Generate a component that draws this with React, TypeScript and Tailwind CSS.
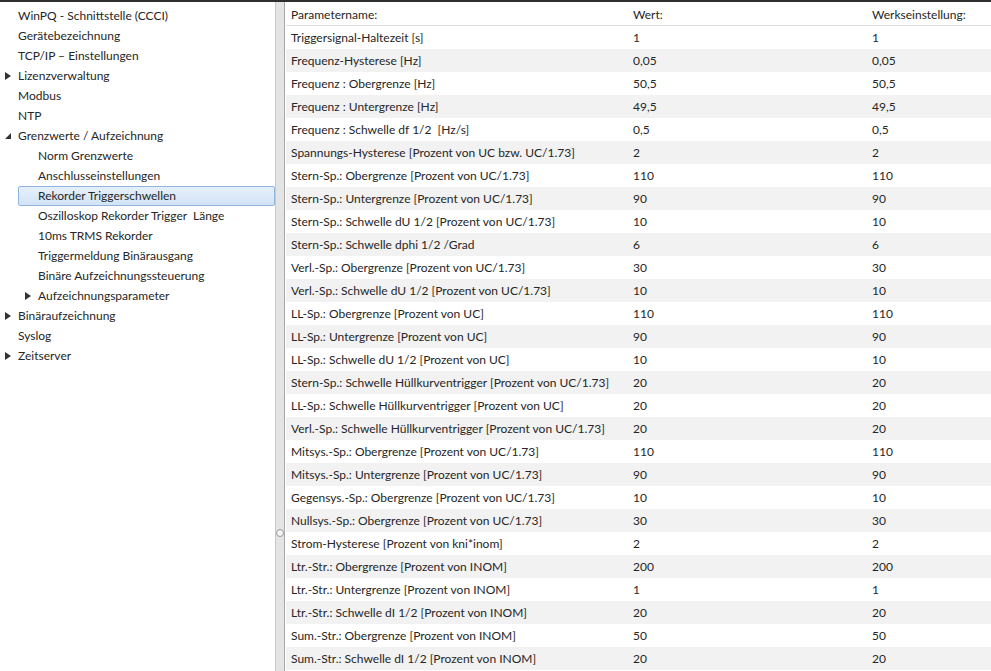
import React from "react";

type Node = { label: string; level: number; arrow?: "closed" | "open"; selected?: boolean };

const tree: Node[] = [
  { label: "WinPQ - Schnittstelle (CCCI)", level: 0 },
  { label: "Gerätebezeichnung", level: 0 },
  { label: "TCP/IP – Einstellungen", level: 0 },
  { label: "Lizenzverwaltung", level: 0, arrow: "closed" },
  { label: "Modbus", level: 0 },
  { label: "NTP", level: 0 },
  { label: "Grenzwerte / Aufzeichnung", level: 0, arrow: "open" },
  { label: "Norm Grenzwerte", level: 1 },
  { label: "Anschlusseinstellungen", level: 1 },
  { label: "Rekorder Triggerschwellen", level: 1, selected: true },
  { label: "Oszilloskop Rekorder Trigger  Länge", level: 1 },
  { label: "10ms TRMS Rekorder", level: 1 },
  { label: "Triggermeldung Binärausgang", level: 1 },
  { label: "Binäre Aufzeichnungssteuerung", level: 1 },
  { label: "Aufzeichnungsparameter", level: 1, arrow: "closed" },
  { label: "Binäraufzeichnung", level: 0, arrow: "closed" },
  { label: "Syslog", level: 0 },
  { label: "Zeitserver", level: 0, arrow: "closed" },
];

const rows: [string, string, string][] = [
  ["Triggersignal-Haltezeit [s]", "1", "1"],
  ["Frequenz-Hysterese [Hz]", "0,05", "0,05"],
  ["Frequenz : Obergrenze [Hz]", "50,5", "50,5"],
  ["Frequenz : Untergrenze [Hz]", "49,5", "49,5"],
  ["Frequenz : Schwelle df 1/2  [Hz/s]", "0,5", "0,5"],
  ["Spannungs-Hysterese [Prozent von UC bzw. UC/1.73]", "2", "2"],
  ["Stern-Sp.: Obergrenze [Prozent von UC/1.73]", "110", "110"],
  ["Stern-Sp.: Untergrenze [Prozent von UC/1.73]", "90", "90"],
  ["Stern-Sp.: Schwelle dU 1/2 [Prozent von UC/1.73]", "10", "10"],
  ["Stern-Sp.: Schwelle dphi 1/2 /Grad", "6", "6"],
  ["Verl.-Sp.: Obergrenze [Prozent von UC/1.73]", "30", "30"],
  ["Verl.-Sp.: Schwelle dU 1/2 [Prozent von UC/1.73]", "10", "10"],
  ["LL-Sp.: Obergrenze [Prozent von UC]", "110", "110"],
  ["LL-Sp.: Untergrenze [Prozent von UC]", "90", "90"],
  ["LL-Sp.: Schwelle dU 1/2 [Prozent von UC]", "10", "10"],
  ["Stern-Sp.: Schwelle Hüllkurventrigger [Prozent von UC/1.73]", "20", "20"],
  ["LL-Sp.: Schwelle Hüllkurventrigger [Prozent von UC]", "20", "20"],
  ["Verl.-Sp.: Schwelle Hüllkurventrigger [Prozent von UC/1.73]", "20", "20"],
  ["Mitsys.-Sp.: Obergrenze [Prozent von UC/1.73]", "110", "110"],
  ["Mitsys.-Sp.: Untergrenze [Prozent von UC/1.73]", "90", "90"],
  ["Gegensys.-Sp.: Obergrenze [Prozent von UC/1.73]", "10", "10"],
  ["Nullsys.-Sp.: Obergrenze [Prozent von UC/1.73]", "30", "30"],
  ["Strom-Hysterese [Prozent von kni*inom]", "2", "2"],
  ["Ltr.-Str.: Obergrenze [Prozent von INOM]", "200", "200"],
  ["Ltr.-Str.: Untergrenze [Prozent von INOM]", "1", "1"],
  ["Ltr.-Str.: Schwelle dI 1/2 [Prozent von INOM]", "20", "20"],
  ["Sum.-Str.: Obergrenze [Prozent von INOM]", "50", "50"],
  ["Sum.-Str.: Schwelle dI 1/2 [Prozent von INOM]", "20", "20"],
];

function Arrow({ kind }: { kind: "closed" | "open" }) {
  if (kind === "closed") {
    return (
      <svg width="6" height="8" viewBox="0 0 6 8" className="shrink-0">
        <polygon points="0,0 6,4 0,8" fill="#333" />
      </svg>
    );
  }
  return (
    <svg width="6" height="6" viewBox="0 0 6 6" className="shrink-0">
      <polygon points="6,0 6,6 0,6" fill="#333" />
    </svg>
  );
}

function TreeRow({ node }: { node: Node }) {
  const indent = node.level === 0 ? "pl-[5px]" : "pl-[25px]";
  return (
    <div className={`flex h-[20px] items-center ${indent}`}>
      <div className="flex w-[13px] items-center">{node.arrow && <Arrow kind={node.arrow} />}</div>
      <div
        className={
          node.selected
            ? "ml-[-20px] flex h-[20px] flex-1 items-center rounded-[2px] border border-[#8fb4de] bg-gradient-to-b from-[#e6f0fb] to-[#d2e3f6] pl-[19px]"
            : "flex h-[20px] flex-1 items-center"
        }
      >
        <span className="whitespace-pre">{node.label}</span>
      </div>
    </div>
  );
}

export default function App() {
  return (
    <div
      className="flex h-[671px] w-[991px] flex-col overflow-hidden bg-white text-[12px] text-[#262626]"
      style={{ fontFamily: 'Lato, "Noto Sans", sans-serif' }}
    >
      <div className="h-[2px] bg-[#2e2e2e]" />
      <div className="flex min-h-0 flex-1">
        {/* Tree */}
        <div className="w-[276px] shrink-0 border-r border-[#c9c9c9] pt-[4px]">
          {tree.map((n) => (
            <TreeRow key={n.label} node={n} />
          ))}
        </div>

        {/* Splitter */}
        <div className="relative w-[9px] shrink-0 border-r border-[#a8a8a8] bg-[#e4e4e4]">
          <div className="absolute left-[0px] top-[527px] h-[8px] w-[8px] rounded-full border border-[#9a9a9a] bg-[#f4f4f4]" />
        </div>

        {/* Table */}
        <div className="min-w-0 flex-1 pl-[1px]">
          <div className="grid h-[24px] grid-cols-[342px_239px_1fr] items-center border-b border-[#e2e2e2] pt-[2px]">
            <div className="pl-[5px]">Parametername:</div>
            <div className="pl-[5px]">Wert:</div>
            <div className="pl-[5px]">Werkseinstellung:</div>
          </div>
          {rows.map((r, i) => (
            <div
              key={r[0]}
              className={`grid h-[23px] grid-cols-[342px_239px_1fr] items-center ${
                i % 2 === 1 ? "bg-[#f2f2f2]" : "bg-white"
              }`}
            >
              <div className="truncate whitespace-pre pl-[5px]">{r[0]}</div>
              <div className="pl-[5px]">{r[1]}</div>
              <div className="pl-[5px]">{r[2]}</div>
            </div>
          ))}
        </div>
      </div>
    </div>
  );
}
